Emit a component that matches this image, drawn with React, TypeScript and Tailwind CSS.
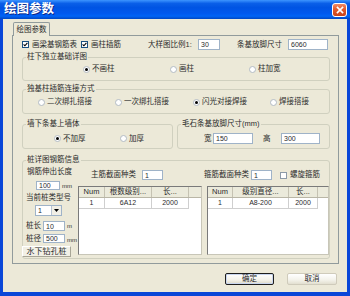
import type { ReactNode } from 'react';

// XP 风格的“绘图参数”对话框

function Check({ checked, className = '' }: { checked?: boolean; className?: string }) {
  return (
    <span
      className={`flex h-[7px] w-[7px] shrink-0 items-center justify-center border border-[#1c5180] bg-white ${className}`}
    >
      {checked && (
        <svg viewBox="0 0 5 5" className="h-[5px] w-[5px]">
          <path d="M0.6 2.4 L1.9 3.8 L4.4 0.9" stroke="#000" strokeWidth="1.1" fill="none" />
        </svg>
      )}
    </span>
  );
}

function Radio({ on }: { on?: boolean }) {
  return (
    <span className="flex h-[7px] w-[7px] shrink-0 items-center justify-center rounded-full border border-[#b3bbc4] bg-white">
      {on && <span className="h-[3px] w-[3px] rounded-full bg-black" />}
    </span>
  );
}

function Opt({ label, on, className = '' }: { label: string; on?: boolean; className?: string }) {
  return (
    <div className={`flex items-center gap-[2px] ${className}`}>
      <Radio on={on} />
      <span className="whitespace-nowrap">{label}</span>
    </div>
  );
}

function Field({ value, className = '' }: { value: string; className?: string }) {
  return (
    <div className={`flex shrink-0 items-center border border-[#9fb3c8] bg-white pl-[2px] text-[7px] leading-none ${className}`}>
      {value}
    </div>
  );
}

function Group({ title, className = '', children }: { title: string; className?: string; children?: ReactNode }) {
  return (
    <fieldset className={`rounded-[3px] border border-[#d0d0bf] ${className}`}>
      <legend className="ml-[3px] px-[1px] leading-[10px] whitespace-nowrap">{title}</legend>
      {children}
    </fieldset>
  );
}

interface Col {
  label: string;
  w: string;
}

function Table({ cols, row, className = '' }: { cols: Col[]; row: string[]; className?: string }) {
  return (
    <div className={`flex flex-col border-t border-l border-[#7a7a7a] border-r border-b border-r-[#c8c6b8] border-b-[#c8c6b8] bg-white ${className}`}>
      <div className="flex h-[11px] shrink-0 border-b border-[#b9b6a6] bg-[#ebeadb]">
        {cols.map((c) => (
          <div
            key={c.label}
            className={`flex items-center justify-center overflow-hidden whitespace-nowrap border-r border-[#c5c2b2] ${c.w}`}
          >
            {c.label}
          </div>
        ))}
        <div className="flex-1" />
      </div>
      <div className="flex h-[11px] shrink-0">
        {cols.map((c, i) => (
          <div
            key={c.label}
            className={`flex items-center justify-center border-r border-b border-[#cfcfcf] text-[7px] ${c.w}`}
          >
            {row[i]}
          </div>
        ))}
      </div>
    </div>
  );
}

export default function App() {
  return (
    <div className="flex h-[296px] w-[350px] flex-col overflow-hidden font-['Liberation_Sans','Noto_Sans_CJK_SC',sans-serif] text-[7.5px] leading-[10px] text-[#2b2b2b]">
      {/* 标题栏 */}
      <div className="flex h-[19px] shrink-0 items-center justify-between bg-[linear-gradient(180deg,#3d95ff_0%,#0a5fe8_18%,#0054e3_40%,#0058ee_70%,#0064f6_85%,#0046c2_100%)] pr-[3px] pl-[4px]">
        <span className="text-[12.5px] leading-none font-bold text-white [text-shadow:1px_1px_0_#0c2a8a]">绘图参数</span>
        <div className="flex h-[14px] w-[15px] items-center justify-center rounded-[3px] border border-white bg-[linear-gradient(180deg,#f08a66_0%,#e25a2c_45%,#c8421a_100%)]">
          <svg viewBox="0 0 9 9" className="h-[8px] w-[8px]">
            <path d="M1 1 L8 8 M8 1 L1 8" stroke="#fff" strokeWidth="1.8" />
          </svg>
        </div>
      </div>

      {/* 主体 */}
      <div className="flex flex-1 flex-col border-x-[3px] border-b-[4px] border-[#0a47d8] bg-[#ece9d8]">
        <div className="mt-[3px] ml-[10px] flex">
          <div className="relative z-10 -mb-px flex h-[14px] w-[37px] items-center justify-center rounded-t-[2px] border-x border-t border-[#919b9c] bg-[#ece9d8]">
            绘图参数
          </div>
        </div>

        <div className="ml-[9px] flex h-[229px] w-[327px] flex-col border border-[#919b9c] pt-[3px] pl-[9px]">
          {/* 第一行 */}
          <div className="flex h-[11px] items-center">
            <Check checked />
            <span className="ml-[3px] w-[46px] whitespace-nowrap">画梁基钢筋表</span>
            <Check checked className="ml-[3px]" />
            <span className="ml-[3px] w-[54px] whitespace-nowrap">画柱插筋</span>
            <span className="ml-[3px] w-[50px] whitespace-nowrap">大样图比例1:</span>
            <Field value="30" className="h-[11px] w-[22px]" />
            <span className="ml-[17px] w-[51px] whitespace-nowrap">条基放脚尺寸</span>
            <Field value="6060" className="h-[11px] w-[40px]" />
          </div>

          <Group title="柱下独立基础详图" className="mt-[2px] h-[29px] w-[308px]">
            <div className="mt-[2px] flex h-[10px] items-center">
              <Opt label="不画柱" on className="ml-[60px] w-[87px]" />
              <Opt label="画柱" className="w-[79px]" />
              <Opt label="柱加宽" />
            </div>
          </Group>

          <Group title="独基柱插筋连接方式" className="mt-[3px] h-[30px] w-[308px]">
            <div className="mt-[3px] flex h-[10px] items-center">
              <Opt label="二次绑扎搭接" className="ml-[15px] w-[77px]" />
              <Opt label="一次绑扎搭接" className="w-[78px]" />
              <Opt label="闪光对接焊接" on className="w-[77px]" />
              <Opt label="焊接搭接" />
            </div>
          </Group>

          <div className="mt-[5px] flex gap-[4px]">
            <Group title="墙下条基上墙体" className="h-[30px] w-[151px]">
              <div className="mt-[4px] flex h-[11px] items-center">
                <Opt label="不加厚" on className="ml-[31px] w-[66px]" />
                <Opt label="加厚" />
              </div>
            </Group>
            <Group title="毛石条基放脚尺寸(mm)" className="h-[30px] w-[153px]">
              <div className="mt-[4px] flex h-[11px] items-center">
                <span className="ml-[26px] w-[9px]">宽</span>
                <Field value="150" className="h-[11px] w-[40px]" />
                <span className="ml-[10px] w-[18px]">高</span>
                <Field value="300" className="h-[11px] w-[39px]" />
              </div>
            </Group>
          </div>

          <Group title="桩详图钢筋信息" className="mt-[6px] h-[104px] w-[308px]">
            <div className="flex">
              {/* 左列 */}
              <div className="flex w-[55px] shrink-0 flex-col">
                <span className="mt-[2px] ml-[4px] h-[10px] whitespace-nowrap">钢筋伸出长度</span>
                <div className="mt-[4px] flex h-[9px] items-center">
                  <Field value="100" className="ml-[13px] h-[9px] w-[24px]" />
                  <span className="ml-[2px] text-[6px]">mm</span>
                </div>
                <span className="mt-[3px] ml-[3px] h-[10px] whitespace-nowrap">当前桩类型号</span>
                <div className="mt-[2px] ml-[12px] flex h-[11px] w-[27px] border border-[#9fb3c8] bg-white">
                  <span className="flex flex-1 items-center pl-[2px] text-[7px]">1</span>
                  <span className="flex w-[10px] items-center justify-center border-l border-[#b8c4d2] bg-[#f1efe6]">
                    <svg viewBox="0 0 5 3" className="h-[3px] w-[5px]">
                      <path d="M0 0 H5 L2.5 3 Z" fill="#000" />
                    </svg>
                  </span>
                </div>
                <div className="mt-[5px] flex h-[10px] items-center">
                  <span className="ml-[3px] w-[17px] whitespace-nowrap">桩长</span>
                  <Field value="10" className="h-[10px] w-[22px]" />
                  <span className="ml-[2px] text-[6px]">m</span>
                </div>
                <div className="mt-[3px] flex h-[9px] items-center">
                  <span className="ml-[3px] w-[17px] whitespace-nowrap">桩径</span>
                  <Field value="500" className="h-[9px] w-[22px]" />
                  <span className="mt-[3px] ml-[2px] text-[6px]">mm</span>
                </div>
                <div className="mt-[3px] -ml-px flex h-[11px] w-[49px] items-center justify-center border border-t-white border-l-white border-r-[#a8a697] border-b-[#a8a697] bg-[#f2f0e6] text-[8px] whitespace-nowrap">
                  水下钻孔桩
                </div>
              </div>

              {/* 主筋 */}
              <div className="flex w-[124px] shrink-0 flex-col">
                <div className="mt-[5px] flex h-[10px] items-center">
                  <span className="ml-[13px] w-[51px] whitespace-nowrap">主筋截面种类</span>
                  <Field value="1" className="h-[10px] w-[21px]" />
                </div>
                <Table
                  className="mt-[6px] h-[69px] w-[124px]"
                  cols={[
                    { label: 'Num', w: 'w-[26px]' },
                    { label: '根数级别...', w: 'w-[47px]' },
                    { label: '长...', w: 'w-[37px]' },
                  ]}
                  row={['1', '6A12', '2000']}
                />
              </div>

              {/* 箍筋 */}
              <div className="flex w-[127px] shrink-0 flex-col">
                <div className="mt-[5px] flex h-[10px] items-center">
                  <span className="ml-[2px] w-[47px] whitespace-nowrap">箍筋截面种类</span>
                  <Field value="1" className="h-[10px] w-[21px]" />
                  <Check className="ml-[8px] border-[#8c9aa8]" />
                  <span className="ml-[3px] whitespace-nowrap">螺旋箍筋</span>
                </div>
                <Table
                  className="mt-[6px] ml-[5px] h-[69px] w-[122px]"
                  cols={[
                    { label: 'Num', w: 'w-[25px]' },
                    { label: '级别直径...', w: 'w-[56px]' },
                    { label: '长...', w: 'w-[29px]' },
                  ]}
                  row={['1', 'A8-200', '2000']}
                />
              </div>
            </div>
          </Group>
        </div>

        {/* 按钮 */}
        <div className="mt-[9px] flex justify-end gap-[13px] pr-[10px]">
          <button className="flex h-[12px] w-[49px] items-center justify-center rounded-[2px] border border-[#1e1e1e] bg-[linear-gradient(180deg,#ffffff_0%,#f3f2ea_60%,#dcd8c8_100%)] shadow-[inset_0_0_0_1px_#c9d6ef]">
            确定
          </button>
          <button className="flex h-[12px] w-[50px] items-center justify-center rounded-[2px] border border-[#cfcbbb] bg-[linear-gradient(180deg,#ffffff_0%,#f3f2ea_60%,#e2dfd0_100%)]">
            取消
          </button>
        </div>
      </div>
    </div>
  );
}
